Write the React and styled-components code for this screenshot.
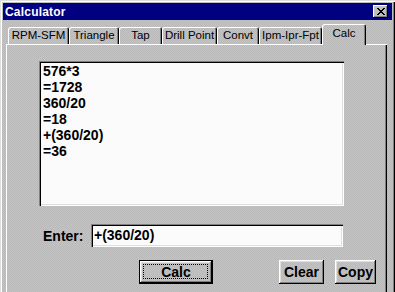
import React from "react";
import styled, { createGlobalStyle } from "styled-components";

const GlobalStyle = createGlobalStyle`
  body {
    margin: 0;
    background: #c0c0c0;
  }
  * {
    box-sizing: border-box;
  }
`;

const dither = `
  background-color: #bfbfbf;
  background-image: repeating-conic-gradient(#c4c4c4 0 25%, #b9b9b9 0 50%);
  background-size: 2px 2px;
`;

const Window = styled.div`
  width: 395px;
  height: 292px;
  overflow: hidden;
  padding: 3px 3px 0 3px;
  ${dither}
  box-shadow: inset 1px 1px #dfdfdf, inset 2px 2px #ffffff,
    inset -1px 0 #000000, inset -2px 0 #808080;
  font-family: "Liberation Sans", Arial, sans-serif;
  color: #000;
`;

const TitleBar = styled.div`
  height: 17px;
  background: #000080;
  display: flex;
  align-items: center;
  justify-content: space-between;
  padding: 0 4px 0 2px;
`;

const Title = styled.div`
  color: #fff;
  font-weight: bold;
  font-size: 12px;
  letter-spacing: 0.2px;
`;

const CloseButton = styled.div`
  width: 15px;
  height: 13px;
  background: #c0c0c0;
  display: flex;
  align-items: center;
  justify-content: center;
  box-shadow: inset -1px -1px #000, inset 1px 1px #fff, inset -2px -2px #808080;
`;

const TabRow = styled.div`
  display: flex;
  align-items: flex-end;
  height: 24px;
  padding-left: 5px;
  position: relative;
  z-index: 1;
`;

const Tab = styled.div`
  width: ${(p) => p.$w}px;
  height: ${(p) => (p.$active ? 21 : 17)}px;
  margin-bottom: ${(p) => (p.$active ? -1 : 0)}px;
  display: flex;
  align-items: center;
  justify-content: center;
  padding-bottom: ${(p) => (p.$active ? 4 : 1)}px;
  font-size: 11.5px;
  border-radius: 2px 2px 0 0;
  ${dither}
  box-shadow: inset 1px 1px #fff, inset -1px 0 #000, inset -2px 0 #808080;
`;

const Panel = styled.div`
  height: 260px;
  margin: 0 5px 0 3px;
  padding: 17px 0 0 33px;
  box-shadow: inset 1px 1px #fff, inset -1px 0 #000, inset -2px 0 #808080;
`;

const Field = styled.div`
  background: #fbfbfb;
  box-shadow: inset 1px 1px #808080, inset 2px 2px #000,
    inset -1px -1px #fff, inset -2px -2px #dfdfdf;
  font-weight: bold;
  font-size: 14px;
  padding: 2px 4px;
`;

const Display = styled(Field)`
  width: 305px;
  height: 145px;
  line-height: 16px;
  white-space: pre-line;
`;

const EntryRow = styled.div`
  display: flex;
  align-items: center;
  margin-top: 18px;
  padding-left: 4px;
`;

const Label = styled.div`
  width: 48px;
  font-weight: bold;
  font-size: 14px;
`;

const Input = styled(Field)`
  width: 252px;
  height: 23px;
  line-height: 19px;
  padding: 2px 3px;
`;

const ButtonRow = styled.div`
  display: flex;
  margin-top: 13px;
  padding-left: 100px;
`;

const Button = styled.div`
  width: ${(p) => p.$w}px;
  height: 24px;
  margin-left: ${(p) => p.$gap || 0}px;
  display: flex;
  align-items: center;
  justify-content: center;
  font-weight: bold;
  font-size: 14px;
  position: relative;
  ${dither}
  border: ${(p) => (p.$default ? "1px solid #000" : "none")};
  box-shadow: inset -1px -1px #000, inset 1px 1px #fff,
    inset -2px -2px #808080, inset 2px 2px #dfdfdf;
`;

const FocusRing = styled.div`
  position: absolute;
  inset: 3px 4px 4px 3px;
  border: 1px dotted #000;
`;

const tabs = [
  ["RPM-SFM", 61],
  ["Triangle", 50],
  ["Tap", 43],
  ["Drill Point", 55],
  ["Convt", 42],
  ["Ipm-Ipr-Fpt", 63],
];

export default function App() {
  return (
    <>
      <GlobalStyle />
      <Window>
        <TitleBar>
          <Title>Calculator</Title>
          <CloseButton>
            <svg width="8" height="7" viewBox="0 0 8 7">
              <path d="M0 0 L7 7 M1 0 L8 7 M7 0 L0 7 M8 0 L1 7" stroke="#000" strokeWidth="1" />
            </svg>
          </CloseButton>
        </TitleBar>
        <TabRow>
          {tabs.map(([name, w]) => (
            <Tab key={name} $w={w}>
              {name}
            </Tab>
          ))}
          <Tab $w={44} $active>
            Calc
          </Tab>
        </TabRow>
        <Panel>
          <Display>
            {"576*3\n=1728\n360/20\n=18\n+(360/20)\n=36"}
          </Display>
          <EntryRow>
            <Label>Enter:</Label>
            <Input>+(360/20)</Input>
          </EntryRow>
          <ButtonRow>
            <Button $w={74} $default>
              Calc
              <FocusRing />
            </Button>
            <Button $w={45} $gap={66}>
              Clear
            </Button>
            <Button $w={41} $gap={11}>
              Copy
            </Button>
          </ButtonRow>
        </Panel>
      </Window>
    </>
  );
}
